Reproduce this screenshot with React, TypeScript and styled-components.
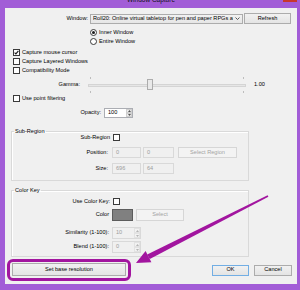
import React from "react";
import styled, { createGlobalStyle } from "styled-components";

const FRAME = "#a25dd7";
const MARK = "#a2159f";

const Global = createGlobalStyle`
  html, body { margin: 0; padding: 0; background: #fff; }
  body { font-family: "Liberation Sans", Arial, sans-serif; }
  * { box-sizing: border-box; }
`;

const Window = styled.div`
  position: relative;
  width: 300px;
  height: 290px;
  background: ${FRAME};
  padding: 0 3px 6px 5px;
  display: flex;
  flex-direction: column;
  overflow: hidden;
  font-size: 5.6px;
  line-height: 1;
  color: #000;
`;

const TitleBar = styled.div`
  flex: none;
  height: 8px;
  display: grid;
  grid-template-columns: 1fr auto 1fr;
  align-items: start;
  overflow: hidden;
`;

const Title = styled.div`
  grid-column: 2;
  font-size: 6.5px;
  line-height: 8px;
  margin-top: -4px;
  color: #111;
`;

const CloseButton = styled.div`
  grid-column: 3;
  justify-self: end;
  width: 14px;
  height: 2px;
  background: #c8372d;
`;

const Client = styled.div`
  flex: 1;
  background: #f0f0f0;
  display: flex;
  flex-direction: column;
  padding-top: 5px;
`;

const Row = styled.div<{ $h: number; $mt?: number; $pl?: number; $gap?: number }>`
  display: flex;
  align-items: center;
  height: ${(p) => p.$h}px;
  margin-top: ${(p) => p.$mt ?? 0}px;
  padding-left: ${(p) => p.$pl ?? 0}px;
  gap: ${(p) => p.$gap ?? 0}px;
  flex: none;
`;

const Label = styled.span<{ $w: number; $gap?: number }>`
  width: ${(p) => p.$w}px;
  margin-right: ${(p) => p.$gap ?? 3}px;
  text-align: right;
  white-space: nowrap;
  flex: none;
`;

const Combo = styled.div`
  width: 153px;
  height: 10px;
  border: 1px solid #acacac;
  background: linear-gradient(#f2f2f2, #e6e6e6);
  display: flex;
  align-items: center;
  padding: 0 2px 0 2px;
  gap: 2px;
  overflow: hidden;
`;

const ComboText = styled.span`
  flex: 1;
  white-space: nowrap;
  overflow: hidden;
`;

const Button = styled.button<{ $w: number; $h: number; $kind?: "normal" | "primary" | "disabled" }>`
  width: ${(p) => p.$w}px;
  height: ${(p) => p.$h}px;
  flex: none;
  padding: 0;
  margin: 0;
  font: inherit;
  line-height: 1;
  border: 1px solid
    ${(p) => (p.$kind === "primary" ? "#72aee4" : p.$kind === "disabled" ? "#d6d6d6" : "#acacac")};
  background: ${(p) =>
    p.$kind === "disabled" ? "#f3f3f3" : "linear-gradient(#f1f1f1, #e4e4e4)"};
  color: ${(p) => (p.$kind === "disabled" ? "#a3a3a3" : "#000")};
`;

const Check = styled.span<{ $ml?: number }>`
  width: 7px;
  height: 7px;
  flex: none;
  margin-left: ${(p) => p.$ml ?? 0}px;
  border: 1px solid #3a3a3a;
  background: #fff;
  display: flex;
  align-items: center;
  justify-content: center;
`;

const Radio = styled.span<{ $on?: boolean }>`
  width: 7px;
  height: 7px;
  flex: none;
  border-radius: 50%;
  border: 1px solid #3a3a3a;
  background: #fff;
  display: flex;
  align-items: center;
  justify-content: center;
  &::after {
    content: "";
    width: 3px;
    height: 3px;
    border-radius: 50%;
    background: ${(p) => (p.$on ? "#1c1c1c" : "transparent")};
  }
`;

const OptionText = styled.span`
  margin-left: 2px;
  white-space: nowrap;
`;

const Slider = styled.div`
  position: relative;
  width: 158px;
  height: 18px;
  flex: none;
  padding: 1px 0 1px;
  display: flex;
  flex-direction: column;
  justify-content: space-between;
`;

const TickRow = styled.div`
  display: flex;
  justify-content: space-between;
  padding: 0 2px;
  height: 2px;
`;

const Tick = styled.span`
  width: 1px;
  height: 2px;
  background: #bdbdbd;
`;

const Track = styled.div`
  height: 3px;
  border: 1px solid #d4d4d4;
  background: #e6e6e6;
`;

const Thumb = styled.div`
  position: absolute;
  top: 3px;
  width: 6px;
  height: 11px;
  border: 1px solid #acacac;
  background: #e9e9e9;
`;

const Value = styled.span`
  margin-left: 8px;
`;

const Spin = styled.div<{ $w: number; $h: number; $disabled?: boolean }>`
  width: ${(p) => p.$w}px;
  height: ${(p) => p.$h}px;
  flex: none;
  display: flex;
  border: 1px solid ${(p) => (p.$disabled ? "#d9d9d9" : "#abadb3")};
  background: ${(p) => (p.$disabled ? "#f0f0f0" : "#fff")};
  color: ${(p) => (p.$disabled ? "#9c9c9c" : "#000")};
`;

const SpinText = styled.span`
  flex: 1;
  display: flex;
  align-items: center;
  padding-left: 3px;
`;

const SpinArrows = styled.div`
  width: 6px;
  display: flex;
  flex-direction: column;
`;

const SpinArrow = styled.div<{ $disabled?: boolean }>`
  flex: 1;
  border: 1px solid ${(p) => (p.$disabled ? "#e2e2e2" : "#cfcfcf")};
  background: ${(p) => (p.$disabled ? "#f2f2f2" : "#ececec")};
  display: flex;
  align-items: center;
  justify-content: center;
`;

const TextInput = styled.div<{ $w: number }>`
  width: ${(p) => p.$w}px;
  height: 11px;
  flex: none;
  border: 1px solid #d9d9d9;
  background: #f0f0f0;
  color: #9c9c9c;
  display: flex;
  align-items: center;
  padding-left: 3px;
`;

const Group = styled.fieldset<{ $mt: number; $pb: number }>`
  margin: ${(p) => p.$mt}px 0 0 6px;
  width: 238px;
  padding: 0 0 ${(p) => p.$pb}px 0;
  border: 1px solid #d9d9d9;
  box-shadow: inset 1px 1px 0 #fff;
  min-width: 0;
  flex: none;
  display: flex;
  flex-direction: column;
`;

const Legend = styled.legend`
  margin-left: 2px;
  padding: 0 1px;
  line-height: 6px;
  height: 6px;
  font-size: 5.6px;
`;

const Swatch = styled.div`
  width: 21px;
  height: 12px;
  flex: none;
  border: 1px solid #5c5c5c;
  background: #808080;
`;

const BottomBar = styled.div`
  display: flex;
  align-items: center;
  margin-top: 2px;
  height: 22px;
  padding: 0 5px 0 2px;
  flex: none;
`;

const Highlight = styled.div`
  border: 3px solid ${MARK};
  border-radius: 6px;
  padding: 1px 2px 2px;
  flex: none;
`;

const Spacer = styled.div`
  flex: 1;
`;

const Actions = styled.div`
  display: flex;
  gap: 5px;
`;

const Overlay = styled.svg`
  position: absolute;
  inset: 0;
  pointer-events: none;
`;

const CheckMark = () => (
  <svg width="5" height="5" viewBox="0 0 5 5">
    <polyline points="0.6,2.6 1.9,3.9 4.4,0.8" fill="none" stroke="#1c1c1c" strokeWidth="1.1" />
  </svg>
);

const Chevron = () => (
  <svg width="5" height="3" viewBox="0 0 5 3">
    <polyline points="0.5,0.5 2.5,2.5 4.5,0.5" fill="none" stroke="#333" strokeWidth="0.8" />
  </svg>
);

const Tri = ({ up, color }: { up?: boolean; color: string }) => (
  <svg width="3" height="2" viewBox="0 0 3 2">
    <polygon points={up ? "0,2 3,2 1.5,0" : "0,0 3,0 1.5,2"} fill={color} />
  </svg>
);

function SpinBox({ w, h, value, disabled }: { w: number; h: number; value: string; disabled?: boolean }) {
  const c = disabled ? "#b5b5b5" : "#555";
  return (
    <Spin $w={w} $h={h} $disabled={disabled}>
      <SpinText>{value}</SpinText>
      <SpinArrows>
        <SpinArrow $disabled={disabled}>
          <Tri up color={c} />
        </SpinArrow>
        <SpinArrow $disabled={disabled}>
          <Tri color={c} />
        </SpinArrow>
      </SpinArrows>
    </Spin>
  );
}

function CheckOption({ label, checked }: { label: string; checked?: boolean }) {
  return (
    <Row $h={9} $pl={8}>
      <Check>{checked && <CheckMark />}</Check>
      <OptionText>{label}</OptionText>
    </Row>
  );
}

const gamma = { min: 0.1, max: 2.4, value: 1.0 };

export default function App() {
  const thumbLeft = ((gamma.value - gamma.min) / (gamma.max - gamma.min)) * (158 - 6);
  return (
    <>
      <Global />
      <Window>
        <TitleBar>
          <Title>Window Capture</Title>
          <CloseButton />
        </TitleBar>
        <Client>
          <Row $h={11}>
            <Label $w={83} $gap={2}>Window:</Label>
            <Combo>
              <ComboText>Roll20: Online virtual tabletop for pen and paper RPGs ar</ComboText>
              <Chevron />
            </Combo>
            <Button $w={47} $h={11} style={{ marginLeft: 1 }}>Refresh</Button>
          </Row>
          <Row $h={9} $mt={4} $pl={85}>
            <Radio $on />
            <OptionText>Inner Window</OptionText>
          </Row>
          <Row $h={9} $pl={85}>
            <Radio />
            <OptionText>Entire Window</OptionText>
          </Row>
          <Row $h={2} />
          <CheckOption label="Capture mouse cursor" checked />
          <CheckOption label="Capture Layered Windows" />
          <CheckOption label="Compatibility Mode" />
          <Row $h={18} $mt={1}>
            <Label $w={75} $gap={8}>Gamma:</Label>
            <Slider>
              <TickRow>
                <Tick />
                <Tick />
              </TickRow>
              <Track />
              <TickRow>
                <Tick />
                <Tick />
              </TickRow>
              <Thumb style={{ left: thumbLeft }} />
            </Slider>
            <Value>{gamma.value.toFixed(2)}</Value>
          </Row>
          <CheckOption label="Use point filtering" />
          <Row $h={10} $mt={5}>
            <Label $w={96} $gap={3}>Opacity:</Label>
            <SpinBox w={29} h={10} value="100" />
          </Row>

          <Group $mt={10} $pb={6}>
            <Legend>Sub-Region</Legend>
            <Row $h={7}>
              <Label $w={98} $gap={2}>Sub-Region</Label>
              <Check $ml={1} />
            </Row>
            <Row $h={11} $mt={6}>
              <Label $w={96} $gap={4}>Position:</Label>
              <TextInput $w={29}>0</TextInput>
              <TextInput $w={31} style={{ marginLeft: 2 }}>0</TextInput>
              <Button $w={59} $h={11} $kind="disabled" style={{ marginLeft: 4 }}>
                Select Region
              </Button>
            </Row>
            <Row $h={11} $mt={5}>
              <Label $w={96} $gap={4}>Size:</Label>
              <TextInput $w={29}>696</TextInput>
              <TextInput $w={31} style={{ marginLeft: 2 }}>64</TextInput>
            </Row>
          </Group>

          <Group $mt={6} $pb={3}>
            <Legend>Color Key</Legend>
            <Row $h={7} $mt={5}>
              <Label $w={98} $gap={2}>Use Color Key:</Label>
              <Check $ml={1} />
            </Row>
            <Row $h={12} $mt={4}>
              <Label $w={97} $gap={3}>Color</Label>
              <Swatch />
              <Button $w={48} $h={12} $kind="disabled" style={{ marginLeft: 3 }}>
                Select
              </Button>
            </Row>
            <Row $h={12} $mt={6}>
              <Label $w={97} $gap={3}>Similarity (1-100):</Label>
              <SpinBox w={29} h={12} value="10" disabled />
            </Row>
            <Row $h={12} $mt={2}>
              <Label $w={97} $gap={3}>Blend (1-100):</Label>
              <SpinBox w={29} h={12} value="0" disabled />
            </Row>
          </Group>

          <BottomBar>
            <Highlight>
              <Button $w={114} $h={13}>Set base resolution</Button>
            </Highlight>
            <Spacer />
            <Actions>
              <Button $w={37} $h={11} $kind="primary">OK</Button>
              <Button $w={38} $h={11}>Cancel</Button>
            </Actions>
          </BottomBar>
        </Client>

        <Overlay width="300" height="290" viewBox="0 0 300 290">
          <polygon points="267.6,195.2 268.4,196.8 149.8,259.0 147.2,254.4" fill={MARK} />
          <polygon points="136,263 151.4,262.3 145.6,251.1" fill={MARK} />
        </Overlay>
      </Window>
    </>
  );
}
